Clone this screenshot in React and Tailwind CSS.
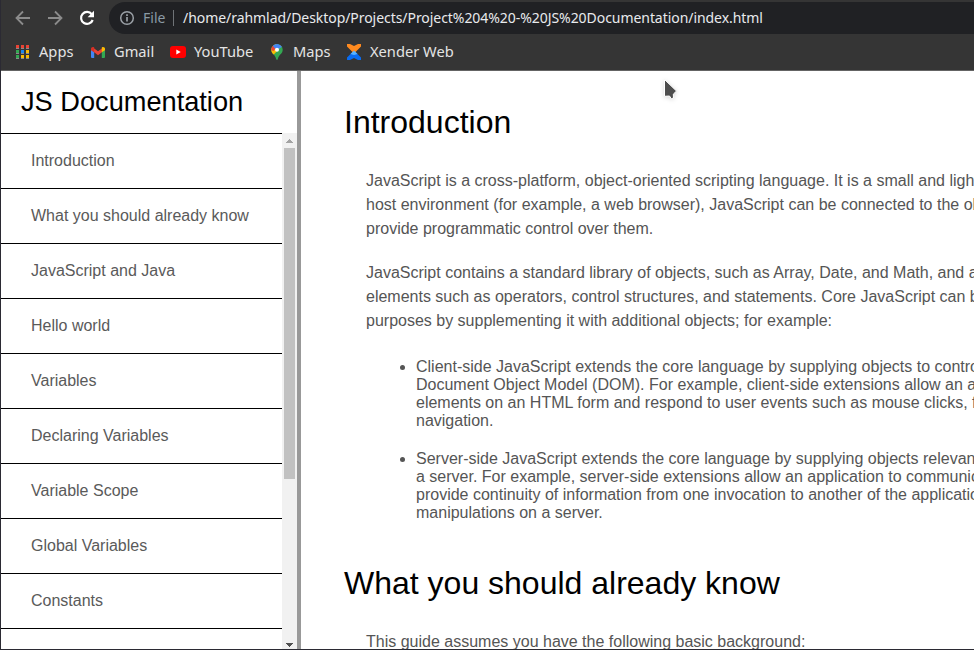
const links = [
  "Introduction",
  "What you should already know",
  "JavaScript and Java",
  "Hello world",
  "Variables",
  "Declaring Variables",
  "Variable Scope",
  "Global Variables",
  "Constants",
];

const paragraphs = [
  [
    "JavaScript is a cross-platform, object-oriented scripting language. It is a small and light",
    "host environment (for example, a web browser), JavaScript can be connected to the ob",
    "provide programmatic control over them.",
  ],
  [
    "JavaScript contains a standard library of objects, such as Array, Date, and Math, and a",
    "elements such as operators, control structures, and statements. Core JavaScript can b",
    "purposes by supplementing it with additional objects; for example:",
  ],
];

const bullets = [
  [
    "Client-side JavaScript extends the core language by supplying objects to contro",
    "Document Object Model (DOM). For example, client-side extensions allow an a",
    "elements on an HTML form and respond to user events such as mouse clicks, f",
    "navigation.",
  ],
  [
    "Server-side JavaScript extends the core language by supplying objects relevan",
    "a server. For example, server-side extensions allow an application to communic",
    "provide continuity of information from one invocation to another of the applicatio",
    "manipulations on a server.",
  ],
];

function Lines({ lines }) {
  return lines.map((line) => <span key={line} className="block">{line}</span>);
}

function AppsIcon() {
  const colors = ["#ea4335", "#ea4335", "#ea4335", "#34a853", "#1a88f0", "#fbbc04", "#34a853", "#fbbc04", "#fbbc04"];
  return (
    <svg className="shrink-0" width="14" height="14" viewBox="0 0 14 14" shapeRendering="crispEdges">
      {colors.map((c, i) => (
        <g key={i}>
          <rect x={(i % 3) * 5} y={Math.floor(i / 3) * 5} width="3" height="3" fill={c} />
          <rect x={(i % 3) * 5} y={Math.floor(i / 3) * 5 + 3} width="3" height="1" fill="#8a8a8a" />
        </g>
      ))}
    </svg>
  );
}

function GmailIcon() {
  return (
    <svg className="shrink-0" width="14" height="11" viewBox="0 0 14 12" preserveAspectRatio="none">
      <path d="M0 3 3.200 5.500V12H1a1 1 0 0 1-1-1z" fill="#4285f4" />
      <path d="M14 3 10.800 5.500V12H13a1 1 0 0 0 1-1z" fill="#34a853" />
      <path d="M2.500 1 7 4.500 11.500 1v4.300L7 9 2.500 5.300z" fill="#ea4335" />
      <path d="M0 2.100C0 .300 1.900-.500 3.200.600v5.200L0 3.500z" fill="#d93025" />
      <path d="M14 2.100C14 .300 12.100-.500 10.800.600v5.200L14 3.500z" fill="#fbbc04" />
    </svg>
  );
}

function YouTubeIcon() {
  return (
    <svg className="shrink-0" width="16" height="12" viewBox="0 0 16 12">
      <rect width="16" height="12" rx="3" fill="#f00" />
      <path d="M6.300 3.500 10.700 6l-4.400 2.500z" fill="#fff" />
    </svg>
  );
}

function MapsIcon() {
  return (
    <svg className="shrink-0" width="12" height="16" viewBox="0 0 12 16">
      <defs>
        <clipPath id="pin">
          <path d="M6 0a5.700 5.700 0 0 1 5.700 5.700C11.700 10 7.500 10.500 6.800 15.200 6.600 16 5.400 16 5.200 15.200 4.500 10.500.3 10 .3 5.700A5.700 5.700 0 0 1 6 0z" />
        </clipPath>
      </defs>
      <g clipPath="url(#pin)">
        <rect width="12" height="16" fill="#34a853" />
        <path d="M2 11.500 10.500 2 4 0 0 4v5z" fill="#fbbc04" />
        <path d="M0 0v6l2.500 1L5 4 2 1z" fill="#ea4335" />
        <path d="M1.500 1.500 5 5.500 6 6l5.500-3.500L8 0H3z" fill="#4285f4" />
      </g>
      <circle cx="6" cy="5.700" r="2" fill="#fff" />
    </svg>
  );
}

function XenderIcon() {
  return (
    <svg className="shrink-0" width="14" height="16" viewBox="0 0 14 16">
      <path d="M0 0h3l4 2 4-2h3v2.500L8.500 8h-3L0 2.500z" fill="#ff8a1f" />
      <path d="M5.500 8h3l5.500 5.500V16h-3l-4-2-4 2H0v-2.500z" fill="#0a6cf0" />
      <path d="M7 6.500 10.500 10 7 11 3.500 10z" fill="#58b2ff" />
    </svg>
  );
}

function Bookmark({ icon, label, className }) {
  return (
    <div className={`flex h-full shrink-0 items-center whitespace-nowrap ${className}`}>
      {icon}
      <span className="pb-0.5">{label}</span>
    </div>
  );
}

function Toolbar() {
  return (
    <header className="h-[71px] shrink-0 border-b border-[#646464] bg-[#353535] font-['Noto_Sans',sans-serif]">
      <div className="flex h-9 items-center">
        <svg className="ml-[14px] shrink-0" width="16" height="16" viewBox="0 0 16 16" fill="none" stroke="#8b8b8b" strokeWidth="1.800">
          <path d="M15 8H2M8 1.500 1.500 8 8 14.500" />
        </svg>
        <svg className="ml-4 shrink-0" width="16" height="16" viewBox="0 0 16 16" fill="none" stroke="#8b8b8b" strokeWidth="1.800">
          <path d="M1 8h13M8 1.500 14.500 8 8 14.500" />
        </svg>
        <svg className="ml-4 shrink-0" width="16" height="16" viewBox="0 0 16 16" fill="none">
          <path d="M12.800 4.200A6 6 0 1 0 13.700 10" stroke="#fff" strokeWidth="2.200" />
          <path d="M15 .8v6.400H8.600z" fill="#fff" />
        </svg>
        <div className="ml-[14px] flex h-8 flex-1 items-center overflow-hidden rounded-l-full bg-[#202124] pl-[10px] text-sm whitespace-nowrap text-[#e8eaed]">
          <svg className="shrink-0" width="16" height="16" viewBox="0 0 16 16" fill="none">
            <circle cx="8" cy="8" r="6.300" stroke="#9aa0a6" strokeWidth="1.500" />
            <path d="M8 7v4.500M8 4.300v1.600" stroke="#9aa0a6" strokeWidth="1.700" />
          </svg>
          <span className="ml-2 w-[30px] text-[#8a9aa5]">File</span>
          <span className="h-4 w-px bg-[#6f7377]" />
          <span className="ml-[9px] tracking-[-0.055px]">/home/rahmlad/Desktop/Projects/Project%204%20-%20JS%20Documentation/index.html</span>
        </div>
      </div>
      <div className="flex h-8 items-center text-[14.667px] text-[#e4e4e4]">
        <Bookmark className="ml-[15px] w-[75px] gap-[9px]" icon={<AppsIcon />} label="Apps" />
        <Bookmark className="w-[79px] gap-[9px]" icon={<GmailIcon />} label="Gmail" />
        <Bookmark className="w-[101px] gap-2" icon={<YouTubeIcon />} label="YouTube" />
        <Bookmark className="w-[76px] gap-[10px]" icon={<MapsIcon />} label="Maps" />
        <Bookmark className="gap-[9px]" icon={<XenderIcon />} label="Xender Web" />
      </div>
    </header>
  );
}

function Sidebar() {
  return (
    <aside className="flex w-[300px] shrink-0 flex-col border-r-4 border-[#999]">
      <h1 className="h-[62px] shrink-0 pl-5 text-[27.2px] leading-[62px]">JS Documentation</h1>
      <div className="flex min-h-0 flex-1">
        <nav className="min-w-0 flex-1 overflow-hidden text-[#5a5a5a]">
          {links.map((link) => (
            <a key={link} className="block h-[55px] border-t border-black pl-[30px] leading-[54px] whitespace-nowrap">{link}</a>
          ))}
          <div className="border-t border-black" />
        </nav>
        <div className="flex w-[15px] shrink-0 flex-col items-center bg-[#f1f1f1]">
          <svg className="shrink-0" width="15" height="15" shapeRendering="crispEdges"><path d="M4 10h7L7.500 6z" fill="#a3a3a3" /></svg>
          <div className="h-[331px] w-[11px] shrink-0 bg-[#c1c1c1]" />
          <svg className="mt-auto shrink-0" width="15" height="15" shapeRendering="crispEdges"><path d="M4 9h7L7.500 13z" fill="#505050" /></svg>
        </div>
      </div>
    </aside>
  );
}

export default function App() {
  return (
    <div className="relative flex h-[650px] w-[974px] flex-col overflow-hidden border-b border-l border-[#2b2a33] bg-white font-['Liberation_Sans',Arial,sans-serif] text-base text-black">
      <Toolbar />
      <div className="flex min-h-0 flex-1">
        <Sidebar />
        <main className="min-w-0 flex-1 overflow-hidden pl-[43px] whitespace-nowrap">
          <h2 className="mt-[33px] text-[32px] leading-9">Introduction</h2>
          <div className="pl-[22px] text-[#555]">
            <div className="mt-[29px] flex flex-col gap-5 leading-6">
              {paragraphs.map((lines) => <p key={lines[0]}><Lines lines={lines} /></p>)}
            </div>
            <ul className="mt-[25px] flex list-disc flex-col gap-5 pl-[50px] leading-[18px]">
              {bullets.map((lines) => <li key={lines[0]}><Lines lines={lines} /></li>)}
            </ul>
          </div>
          <h2 className="mt-[43px] text-[32px] leading-9">What you should already know</h2>
          <p className="mt-[29px] pl-[22px] leading-6 text-[#555]">This guide assumes you have the following basic background:</p>
        </main>
      </div>
      <svg className="absolute top-[78px] left-[661px] drop-shadow-sm" width="16" height="24" viewBox="0 0 16 24">
        <path d="M2.500 1.500v16.800l5-.3 1.800 2.700 2.200-.7-.2-3.800L14.500 13z" fill="#4d4d4d" stroke="#fff" />
      </svg>
    </div>
  );
}
